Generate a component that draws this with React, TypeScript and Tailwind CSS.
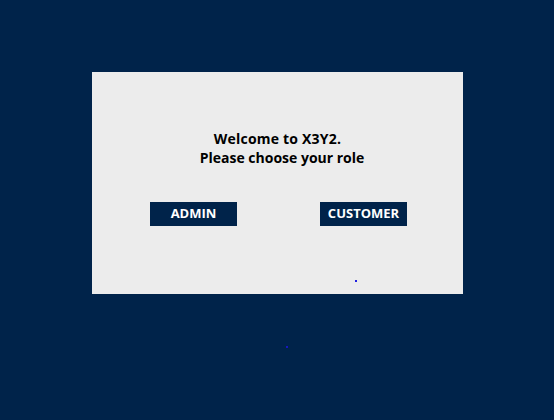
import React from "react";

export default function App() {
  return (
    <div className="w-[554px] h-[420px] bg-[#00234a] pt-[72px] pl-[92px] relative" style={{ fontFamily: '"Open Sans", "Noto Sans", sans-serif' }}>
      <div className="w-[371px] h-[222px] bg-[#ececec] relative pt-[57px]">
        <div className="text-[14px] leading-[19px] font-bold text-black text-center">
          <div className="tracking-[0.2px]">Welcome to X3Y2.</div>
          <div className="pl-[9px]">Please choose your role</div>
        </div>
        <div className="flex gap-[83px] pl-[58px] mt-[35px]">
          <button className="w-[87px] h-[24px] bg-[#00234a] text-white text-[13px] font-bold flex items-center justify-center">ADMIN</button>
          <button className="w-[87px] h-[24px] bg-[#00234a] text-white text-[13px] font-bold flex items-center justify-center">CUSTOMER</button>
        </div>
        <div className="absolute left-[263px] top-[208px] w-[2px] h-[2px] bg-[#2020e0]" />
      </div>
      <div className="absolute left-[286px] top-[346px] w-[2px] h-[2px] bg-[#1818c0]" />
    </div>
  );
}
